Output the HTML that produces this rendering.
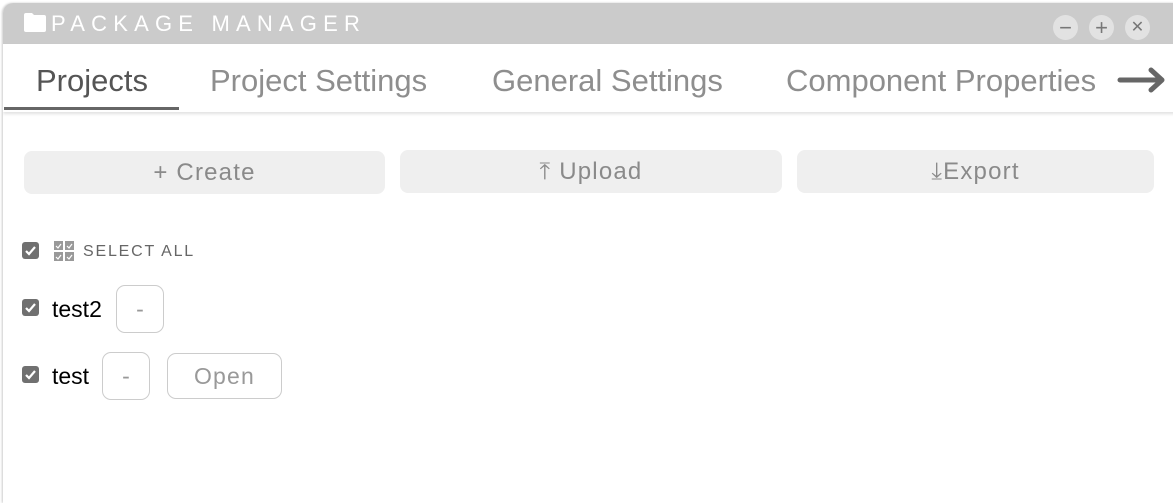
<!DOCTYPE html>
<html><head><meta charset="utf-8"><style>
*{box-sizing:border-box;margin:0;padding:0}
body{width:1173px;height:498px;background:#fff;font-family:"Liberation Sans",Arial,sans-serif;position:relative;overflow:hidden}
.win{position:absolute;left:3px;top:3px;width:1180px;height:500px;border-radius:10px 10px 0 0;box-shadow:-1px 0 2px #ccc;background:#fff;overflow:hidden}
.tb{position:absolute;left:0;top:0;right:0;height:41px;background:#cbcbcb}
.title{position:absolute;left:48px;top:8px;color:#fff;font-size:22px;letter-spacing:6.2px}
.folder{position:absolute;left:21px;top:10px}
.cb{position:absolute;top:12px;width:25px;height:25px;border-radius:50%;background:#e2e2e2;color:#777;font-size:22px;text-align:center;line-height:25px}
.tabs{position:absolute;left:0;top:41px;right:0;height:68px;box-shadow:0 2px 3px rgba(0,0,0,.12);background:#fff}
.tab{position:absolute;top:19px;font-size:31px;color:#8e8e8e}
.ul{position:absolute;left:1px;top:63px;width:175px;height:3px;background:#666}
.btn{position:absolute;height:43px;background:#efefef;border-radius:8px;color:#8a8a8a;font-size:24px;letter-spacing:1.2px;text-align:center;line-height:43px}
.chk{position:absolute;width:17px;height:17px;background:#707070;border-radius:3px}
.chk svg{position:absolute;left:2px;top:2px}
.lbl{position:absolute;font-size:23px;color:#000}
.sb{position:absolute;border:1px solid #ccc;border-radius:9px;color:#999;text-align:center;font-size:23px}
</style></head><body>
<div class="win">
 <div class="tb">
  <svg class="folder" width="22" height="19" viewBox="0 0 22 19"><path d="M0 2 Q0 0 2 0 H8 L10 2 H20 Q22 2 22 4 V17 Q22 19 20 19 H2 Q0 19 0 17Z" fill="#fff"/></svg>
  <div class="title">PACKAGE MANAGER</div>
  <div class="cb" style="left:1050px">−</div>
  <div class="cb" style="left:1086px">+</div>
  <div class="cb" style="left:1122px;font-size:16px">✕</div>
 </div>
 <div class="tabs">
  <div class="tab" style="left:33px;color:#555">Projects</div>
  <div class="tab" style="left:207px">Project Settings</div>
  <div class="tab" style="left:489px">General Settings</div>
  <div class="tab" style="left:783px">Component Properties</div>
  <svg style="position:absolute;left:1114px;top:22px" width="50" height="28" viewBox="0 0 50 28"><path d="M3 14 H45 M34 4 L45 14 L34 24" stroke="#666" stroke-width="5" fill="none" stroke-linecap="round" stroke-linejoin="round"/></svg>
  <div class="ul"></div>
 </div>
</div>
<div class="btn" style="left:24px;top:151px;width:361px">+ Create</div>
<div class="btn" style="left:400px;top:150px;width:382px">⤒ Upload</div>
<div class="btn" style="left:797px;top:150px;width:357px">⤓Export</div>

<div class="chk" style="left:22px;top:242px"><svg width="13" height="13" viewBox="0 0 13 13"><path d="M2 7 L5 10 L11 3" stroke="#fff" stroke-width="2.2" fill="none"/></svg></div>
<svg style="position:absolute;left:54px;top:241px" width="20" height="20" viewBox="0 0 20 20"><rect x="0" y="0" width="9" height="9" fill="#999"/><rect x="11" y="0" width="9" height="9" fill="#999"/><rect x="0" y="11" width="9" height="9" fill="#999"/><rect x="11" y="11" width="9" height="9" fill="#999"/><path d="M2 5l2 2 3-4M13 5l2 2 3-4M2 16l2 2 3-4M13 16l2 2 3-4" stroke="#fff" stroke-width="1.2" fill="none"/></svg>
<div class="lbl" style="left:83px;top:243px;font-size:16px;color:#666;letter-spacing:1.8px">SELECT ALL</div>

<div class="chk" style="left:22px;top:299px"><svg width="13" height="13" viewBox="0 0 13 13"><path d="M2 7 L5 10 L11 3" stroke="#fff" stroke-width="2.2" fill="none"/></svg></div>
<div class="lbl" style="left:52px;top:296px">test2</div>
<div class="sb" style="left:116px;top:285px;width:48px;height:48px;line-height:46px">-</div>

<div class="chk" style="left:22px;top:366px"><svg width="13" height="13" viewBox="0 0 13 13"><path d="M2 7 L5 10 L11 3" stroke="#fff" stroke-width="2.2" fill="none"/></svg></div>
<div class="lbl" style="left:52px;top:363px">test</div>
<div class="sb" style="left:102px;top:352px;width:48px;height:48px;line-height:46px">-</div>
<div class="sb" style="left:167px;top:353px;width:115px;height:46px;line-height:44px;letter-spacing:1.2px">Open</div>
</body></html>
